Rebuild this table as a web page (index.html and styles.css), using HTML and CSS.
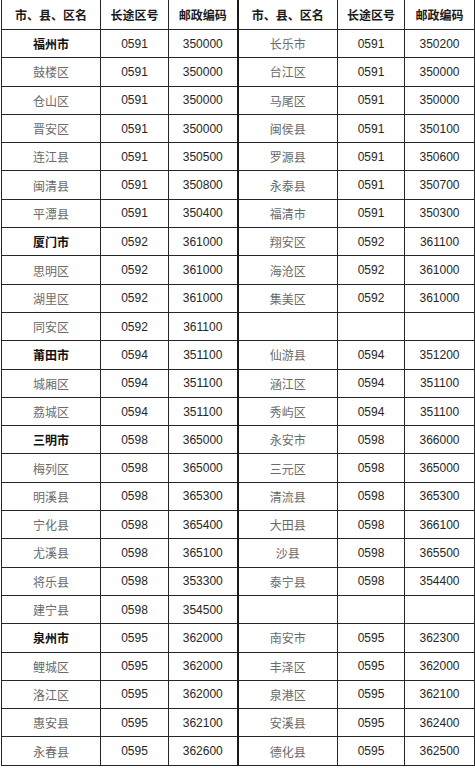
FILE: index.html
```html
<!DOCTYPE html>
<html lang="zh">
<head>
<meta charset="utf-8">
<title>福建省区号邮编</title>
<link rel="stylesheet" href="styles.css">
</head>
<body>
<table class="codes">
  <colgroup>
    <col class="c-name"><col class="c-area"><col class="c-zip">
    <col class="c-name2"><col class="c-area2"><col class="c-zip2">
  </colgroup>
  <thead>
    <tr class="head">
      <th>市、县、区名</th><th>长途区号</th><th class="split">邮政编码</th>
      <th>市、县、区名</th><th>长途区号</th><th>邮政编码</th>
    </tr>
  </thead>
  <tbody>
    <tr><td class="city">福州市</td><td>0591</td><td class="split">350000</td><td class="name">长乐市</td><td>0591</td><td>350200</td></tr>
    <tr><td class="name">鼓楼区</td><td>0591</td><td class="split">350000</td><td class="name">台江区</td><td>0591</td><td>350000</td></tr>
    <tr><td class="name">仓山区</td><td>0591</td><td class="split">350000</td><td class="name">马尾区</td><td>0591</td><td>350000</td></tr>
    <tr><td class="name">晋安区</td><td>0591</td><td class="split">350000</td><td class="name">闽侯县</td><td>0591</td><td>350100</td></tr>
    <tr><td class="name">连江县</td><td>0591</td><td class="split">350500</td><td class="name">罗源县</td><td>0591</td><td>350600</td></tr>
    <tr><td class="name">闽清县</td><td>0591</td><td class="split">350800</td><td class="name">永泰县</td><td>0591</td><td>350700</td></tr>
    <tr><td class="name">平潭县</td><td>0591</td><td class="split">350400</td><td class="name">福清市</td><td>0591</td><td>350300</td></tr>
    <tr><td class="city">厦门市</td><td>0592</td><td class="split">361000</td><td class="name">翔安区</td><td>0592</td><td>361100</td></tr>
    <tr><td class="name">思明区</td><td>0592</td><td class="split">361000</td><td class="name">海沧区</td><td>0592</td><td>361000</td></tr>
    <tr><td class="name">湖里区</td><td>0592</td><td class="split">361000</td><td class="name">集美区</td><td>0592</td><td>361000</td></tr>
    <tr><td class="name">同安区</td><td>0592</td><td class="split">361100</td><td class="name"></td><td></td><td></td></tr>
    <tr><td class="city">莆田市</td><td>0594</td><td class="split">351100</td><td class="name">仙游县</td><td>0594</td><td>351200</td></tr>
    <tr><td class="name">城厢区</td><td>0594</td><td class="split">351100</td><td class="name">涵江区</td><td>0594</td><td>351100</td></tr>
    <tr><td class="name">荔城区</td><td>0594</td><td class="split">351100</td><td class="name">秀屿区</td><td>0594</td><td>351100</td></tr>
    <tr><td class="city">三明市</td><td>0598</td><td class="split">365000</td><td class="name">永安市</td><td>0598</td><td>366000</td></tr>
    <tr><td class="name">梅列区</td><td>0598</td><td class="split">365000</td><td class="name">三元区</td><td>0598</td><td>365000</td></tr>
    <tr><td class="name">明溪县</td><td>0598</td><td class="split">365300</td><td class="name">清流县</td><td>0598</td><td>365300</td></tr>
    <tr><td class="name">宁化县</td><td>0598</td><td class="split">365400</td><td class="name">大田县</td><td>0598</td><td>366100</td></tr>
    <tr><td class="name">尤溪县</td><td>0598</td><td class="split">365100</td><td class="name">沙县</td><td>0598</td><td>365500</td></tr>
    <tr><td class="name">将乐县</td><td>0598</td><td class="split">353300</td><td class="name">泰宁县</td><td>0598</td><td>354400</td></tr>
    <tr><td class="name">建宁县</td><td>0598</td><td class="split">354500</td><td class="name"></td><td></td><td></td></tr>
    <tr><td class="city">泉州市</td><td>0595</td><td class="split">362000</td><td class="name">南安市</td><td>0595</td><td>362300</td></tr>
    <tr><td class="name">鲤城区</td><td>0595</td><td class="split">362000</td><td class="name">丰泽区</td><td>0595</td><td>362000</td></tr>
    <tr><td class="name">洛江区</td><td>0595</td><td class="split">362000</td><td class="name">泉港区</td><td>0595</td><td>362100</td></tr>
    <tr><td class="name">惠安县</td><td>0595</td><td class="split">362100</td><td class="name">安溪县</td><td>0595</td><td>362400</td></tr>
    <tr><td class="name">永春县</td><td>0595</td><td class="split">362600</td><td class="name">德化县</td><td>0595</td><td>362500</td></tr>
  </tbody>
</table>
</body>
</html>
```
FILE: styles.css
```css
html, body {
  margin: 0;
  padding: 0;
  background: #ffffff;
}

.codes {
  margin: -1px 0 0 1px;
  width: 473px;
  border-collapse: collapse;
  table-layout: fixed;
  font-family: "Liberation Sans", Arial, "Noto Sans CJK SC", sans-serif;
  font-size: 12px;
  color: #262626;
}

.c-name { width: 99px; }
.c-area { width: 68px; }
.c-zip { width: 69px; }
.c-name2 { width: 100px; }
.c-area2 { width: 67px; }
.c-zip2 { width: 70px; }

.codes th,
.codes td {
  border: 1px solid #262626;
  padding: 0;
  text-align: center;
  vertical-align: middle;
  white-space: nowrap;
  overflow: hidden;
}

.codes td.split,
.codes th.split {
  border-right: 2px solid #1a1a1a;
}

.head {
  height: 30px;
}

.head th {
  font-family: "Noto Sans CJK SC", sans-serif;
  font-weight: 700;
  font-size: 12px;
  color: #1a1a1a;
}

.codes tbody tr {
  height: 28.3px;
}

.codes td.name {
  font-family: "Noto Sans CJK SC", serif;
  font-weight: 400;
  font-size: 12px;
  color: #6a6a6a;
}

.codes td.city {
  font-family: "Noto Sans CJK SC", sans-serif;
  font-weight: 700;
  font-size: 12px;
  color: #111;
}
```
